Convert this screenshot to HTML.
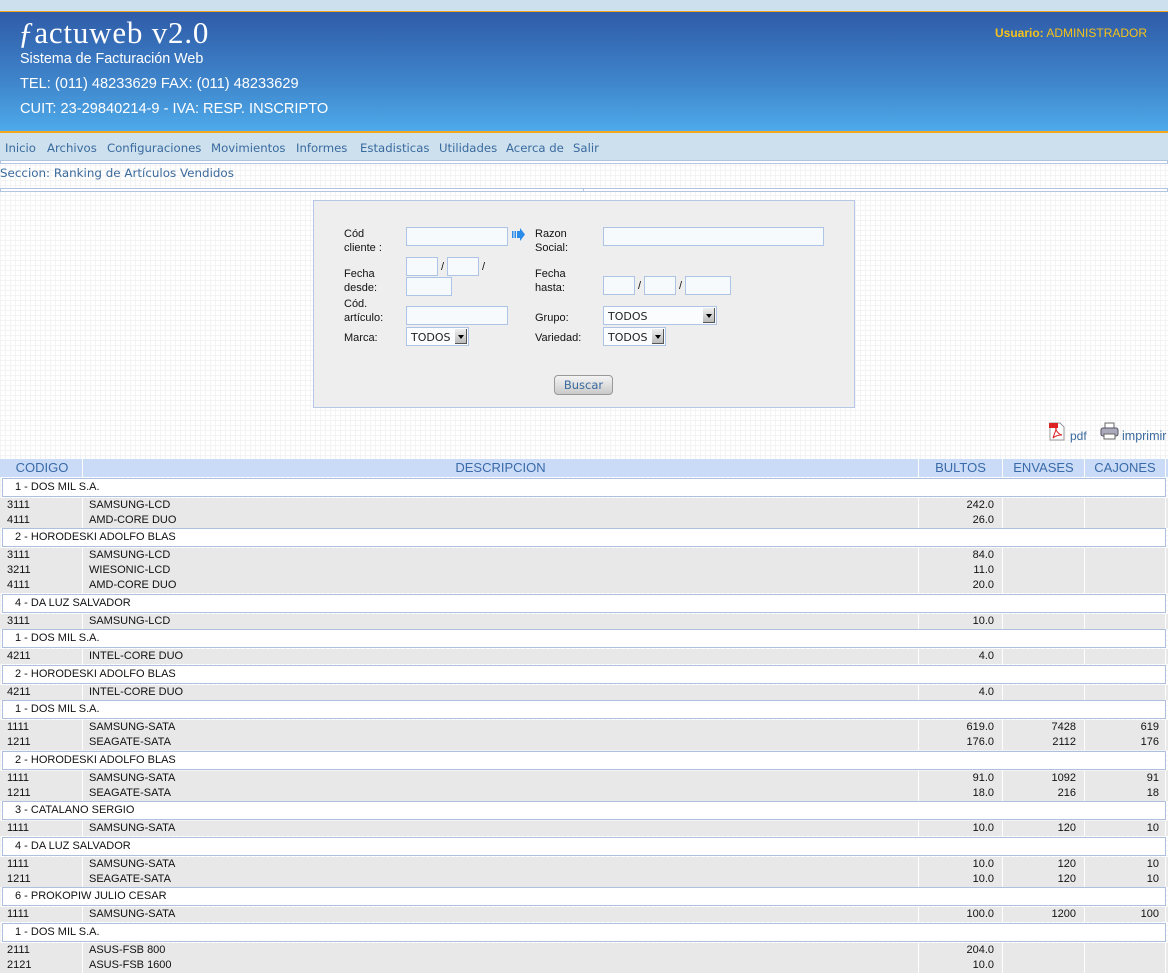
<!DOCTYPE html>
<html><head><meta charset="utf-8">
<style>
*{margin:0;padding:0;box-sizing:border-box}
body{width:1168px;height:973px;overflow:hidden;position:relative;font-family:"Liberation Sans",sans-serif;font-size:11px;color:#111;
background-color:#fff;background-image:linear-gradient(#f3f3f3 1px,transparent 1px),linear-gradient(90deg,#f3f3f3 1px,transparent 1px);background-size:5px 5px}
.a{position:absolute}
.dj{font-family:"DejaVu Sans",sans-serif}
#top{left:0;top:0;width:1168px;height:11px;background:#cde0ee}
#ban{left:0;top:11px;width:1168px;height:122px;border-top:1px solid #f2a81c;border-bottom:2px solid #f2a81c;background:linear-gradient(#2f5ba8,#3f86cc 60%,#4eaaea)}
.w{color:#fff}
#menu{left:0;top:133px;width:1168px;height:28px;background:#cde0ee;border-bottom:1px solid #a9bddc}
#menu span{position:absolute;top:8px;font-size:11.7px;color:#3a6a9e;font-family:"DejaVu Sans",sans-serif}
.ln{left:0;width:1168px;height:4px;border:1px solid #b2c4e0;background:#fff}
#form{left:313px;top:200px;width:542px;height:208px;background:#eeeeee;border:1px solid #b5c8e8}
.lb{position:absolute;font-size:11px;line-height:13.5px;color:#111}
.in{position:absolute;height:19px;background:#f6fafd;border:1px solid #aec4e6}
.sel{position:absolute;height:19px;background:#fbfcfe;border:1px solid #aec4e6;font-size:11px;padding:3px 0 0 4px;color:#222;font-family:"DejaVu Sans",sans-serif}
.sel i{position:absolute;right:1px;top:1px;width:12px;height:15px;background:linear-gradient(#eee,#bbb);border-right:1px solid #555;border-bottom:1px solid #555}
.sel i:after{content:"";position:absolute;left:3px;top:6px;border:3px solid transparent;border-top:4px solid #000}
.sl{position:absolute;font-size:11px}
#btn{left:554px;top:375px;width:59px;height:20px;border:1px solid #999;border-radius:4px;background:linear-gradient(#f4f4f4,#c9c9c9);color:#3a6a9e;font-size:11.5px;text-align:center;line-height:18px;font-family:"DejaVu Sans",sans-serif}
#tbl{left:0;top:459px;width:1168px}
.hd{height:18px;position:relative;background:#c9dbf7}
.hd span,.dr span{position:absolute;top:0;height:100%;border-right:1px solid #fff}
.hd span{color:#3a6aa8;font-size:13px;line-height:18px;text-align:center}
.g{height:19px;margin:0.5px 2px 1px 2px;border:1px solid #aec0de;background:#fff;font-size:11px;line-height:17px;padding-left:12px}
.dr{height:15px;position:relative;background:#e8e8e8}
.dr span{line-height:15px;font-size:11px}
.c1{left:2px;width:81px;padding-left:5px;text-align:left}
.c2{left:83px;width:836px;padding-left:6px;text-align:left}
.c3{left:919px;width:84px;text-align:right;padding-right:8px}
.c4{left:1003px;width:82px;text-align:right;padding-right:8px}
.c5{left:1085px;width:81px;text-align:right;padding-right:6px}
.hd .c1,.hd .c2,.hd .c3,.hd .c4,.hd .c5{text-align:center;padding:0}
</style></head><body>
<div class="a" id="top"></div>
<div class="a" id="ban">
 <div class="a w" style="left:18px;top:3px;font-family:'Liberation Serif',serif;font-size:31px;letter-spacing:0.8px"><i>ƒ</i>actuweb v2.0</div>
 <div class="a w" style="left:20px;top:39px;font-size:14.3px">Sistema de Facturación Web</div>
 <div class="a w" style="left:20px;top:64px;font-size:14.6px">TEL: (011) 48233629 FAX: (011) 48233629</div>
 <div class="a w" style="left:20px;top:89px;font-size:14.6px">CUIT: 23-29840214-9 - IVA: RESP. INSCRIPTO</div>
 <div class="a" style="left:995px;top:14px;font-size:12px;color:#f5c21a"><b>Usuario:</b> ADMINISTRADOR</div>
</div>
<div class="a" id="menu">
<span style="left:5px">Inicio</span><span style="left:47px">Archivos</span><span style="left:107px">Configuraciones</span><span style="left:211px">Movimientos</span><span style="left:296px">Informes</span><span style="left:360px">Estadisticas</span><span style="left:439px">Utilidades</span><span style="left:506px">Acerca de</span><span style="left:573px">Salir</span>
</div>
<div class="a ln" style="top:160px"></div>
<div class="a dj" style="left:0;top:166px;font-size:11.9px;color:#3a6a9e">Seccion: Ranking de Artículos Vendidos</div>
<div class="a ln" style="top:188px"></div>
<div class="a" style="left:583px;top:188px;width:1px;height:4px;background:#b2c4e0"></div>

<div class="a" id="form"></div>
<div class="lb" style="left:344px;top:228px">Cód<br>cliente :</div>
<div class="in" style="left:406px;top:227px;width:102px"></div>
<svg class="a" style="left:511px;top:227px" width="15" height="15" viewBox="0 0 15 15"><rect x="1" y="4" width="1.5" height="7" fill="#2a8be8"/><rect x="3.5" y="4" width="1.5" height="7" fill="#2a8be8"/><path d="M6 4H9V1L14 7.5 9 14V11H6Z" fill="#2a8be8"/></svg>
<div class="lb" style="left:535px;top:228px">Razon<br>Social:</div>
<div class="in" style="left:603px;top:227px;width:221px"></div>

<div class="in" style="left:406px;top:257px;width:32px"></div><div class="sl" style="left:441px;top:261px">/</div>
<div class="in" style="left:447px;top:257px;width:32px"></div><div class="sl" style="left:482px;top:261px">/</div>
<div class="in" style="left:406px;top:277px;width:46px"></div>
<div class="lb" style="left:344px;top:268px">Fecha<br>desde:</div>
<div class="lb" style="left:535px;top:268px">Fecha<br>hasta:</div>
<div class="in" style="left:603px;top:276px;width:32px"></div><div class="sl" style="left:638px;top:280px">/</div>
<div class="in" style="left:644px;top:276px;width:32px"></div><div class="sl" style="left:679px;top:280px">/</div>
<div class="in" style="left:685px;top:276px;width:46px"></div>

<div class="lb" style="left:344px;top:298px">Cód.<br>artículo:</div>
<div class="in" style="left:406px;top:306px;width:102px"></div>
<div class="lb" style="left:535px;top:312px">Grupo:</div>
<div class="sel" style="left:603px;top:306px;width:114px">TODOS<i></i></div>
<div class="lb" style="left:344px;top:332px">Marca:</div>
<div class="sel" style="left:406px;top:327px;width:63px">TODOS<i></i></div>
<div class="lb" style="left:535px;top:332px">Variedad:</div>
<div class="sel" style="left:603px;top:327px;width:63px">TODOS<i></i></div>
<div class="a" id="btn">Buscar</div>

<svg class="a" style="left:1048px;top:422px" width="18" height="19" viewBox="0 0 18 19"><path d="M2 1H12L16 5V18H2Z" fill="#fff" stroke="#999"/><rect x="1" y="1" width="9" height="5" fill="#d22"/><path d="M5 16C7 10 9 6 8 5 7 6 9 12 14 13 11 13 7 14 5 16Z" fill="none" stroke="#d22"/></svg>
<div class="a" style="left:1070px;top:429px;font-size:12px;color:#3a6a9e">pdf</div>
<svg class="a" style="left:1100px;top:422px" width="19" height="18" viewBox="0 0 19 18"><rect x="5" y="1" width="9" height="6" fill="#fff" stroke="#666"/><rect x="1" y="6" width="17" height="8" rx="2" fill="#aab" stroke="#556"/><rect x="4" y="12" width="11" height="5" fill="#fff" stroke="#666"/></svg>
<div class="a" style="left:1122px;top:429px;font-size:12.5px;color:#3a6a9e;white-space:nowrap">imprimir</div>

<div class="a" id="tbl">
<div class="hd"><span class="c1">CODIGO</span><span class="c2">DESCRIPCION</span><span class="c3">BULTOS</span><span class="c4">ENVASES</span><span class="c5">CAJONES</span></div>
<div class="g">1 - DOS MIL S.A.</div>
<div class="dr"><span class="c1">3111</span><span class="c2">SAMSUNG-LCD</span><span class="c3">242.0</span><span class="c4"></span><span class="c5"></span></div>
<div class="dr"><span class="c1">4111</span><span class="c2">AMD-CORE DUO</span><span class="c3">26.0</span><span class="c4"></span><span class="c5"></span></div>
<div class="g">2 - HORODESKI ADOLFO BLAS</div>
<div class="dr"><span class="c1">3111</span><span class="c2">SAMSUNG-LCD</span><span class="c3">84.0</span><span class="c4"></span><span class="c5"></span></div>
<div class="dr"><span class="c1">3211</span><span class="c2">WIESONIC-LCD</span><span class="c3">11.0</span><span class="c4"></span><span class="c5"></span></div>
<div class="dr"><span class="c1">4111</span><span class="c2">AMD-CORE DUO</span><span class="c3">20.0</span><span class="c4"></span><span class="c5"></span></div>
<div class="g">4 - DA LUZ SALVADOR</div>
<div class="dr"><span class="c1">3111</span><span class="c2">SAMSUNG-LCD</span><span class="c3">10.0</span><span class="c4"></span><span class="c5"></span></div>
<div class="g">1 - DOS MIL S.A.</div>
<div class="dr"><span class="c1">4211</span><span class="c2">INTEL-CORE DUO</span><span class="c3">4.0</span><span class="c4"></span><span class="c5"></span></div>
<div class="g">2 - HORODESKI ADOLFO BLAS</div>
<div class="dr"><span class="c1">4211</span><span class="c2">INTEL-CORE DUO</span><span class="c3">4.0</span><span class="c4"></span><span class="c5"></span></div>
<div class="g">1 - DOS MIL S.A.</div>
<div class="dr"><span class="c1">1111</span><span class="c2">SAMSUNG-SATA</span><span class="c3">619.0</span><span class="c4">7428</span><span class="c5">619</span></div>
<div class="dr"><span class="c1">1211</span><span class="c2">SEAGATE-SATA</span><span class="c3">176.0</span><span class="c4">2112</span><span class="c5">176</span></div>
<div class="g">2 - HORODESKI ADOLFO BLAS</div>
<div class="dr"><span class="c1">1111</span><span class="c2">SAMSUNG-SATA</span><span class="c3">91.0</span><span class="c4">1092</span><span class="c5">91</span></div>
<div class="dr"><span class="c1">1211</span><span class="c2">SEAGATE-SATA</span><span class="c3">18.0</span><span class="c4">216</span><span class="c5">18</span></div>
<div class="g">3 - CATALANO SERGIO</div>
<div class="dr"><span class="c1">1111</span><span class="c2">SAMSUNG-SATA</span><span class="c3">10.0</span><span class="c4">120</span><span class="c5">10</span></div>
<div class="g">4 - DA LUZ SALVADOR</div>
<div class="dr"><span class="c1">1111</span><span class="c2">SAMSUNG-SATA</span><span class="c3">10.0</span><span class="c4">120</span><span class="c5">10</span></div>
<div class="dr"><span class="c1">1211</span><span class="c2">SEAGATE-SATA</span><span class="c3">10.0</span><span class="c4">120</span><span class="c5">10</span></div>
<div class="g">6 - PROKOPIW JULIO CESAR</div>
<div class="dr"><span class="c1">1111</span><span class="c2">SAMSUNG-SATA</span><span class="c3">100.0</span><span class="c4">1200</span><span class="c5">100</span></div>
<div class="g">1 - DOS MIL S.A.</div>
<div class="dr"><span class="c1">2111</span><span class="c2">ASUS-FSB 800</span><span class="c3">204.0</span><span class="c4"></span><span class="c5"></span></div>
<div class="dr"><span class="c1">2121</span><span class="c2">ASUS-FSB 1600</span><span class="c3">10.0</span><span class="c4"></span><span class="c5"></span></div>
</div>
</body></html>
